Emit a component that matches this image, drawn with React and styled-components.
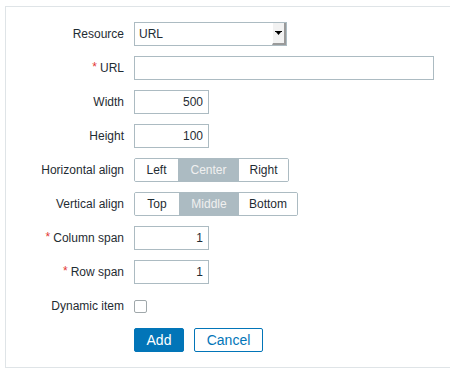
import React from "react";
import styled, { createGlobalStyle } from "styled-components";

const GlobalStyle = createGlobalStyle`
  html, body {
    margin: 0;
    padding: 0;
    background: #ffffff;
    overflow: hidden;
  }
  body {
    font-family: "Liberation Sans", Arial, sans-serif;
    font-size: 12px;
    color: #1f2c33;
  }
`;

const Panel = styled.form`
  margin: 6px 0 0 5px;
  width: 445px;
  box-sizing: border-box;
  border: 1px solid #dfe4e7;
  border-right: none;
  background: #ffffff;
  padding: 15px 0;
  display: grid;
  grid-template-columns: 118px 1fr;
  column-gap: 10px;
  row-gap: 10px;
  grid-auto-rows: 24px;
`;

const Label = styled.label`
  display: flex;
  align-items: center;
  justify-content: flex-end;
  white-space: nowrap;
  color: #1f2c33;

  ${(p) =>
    p.$required &&
    `
    &::before {
      content: "*";
      color: #e33734;
      margin-right: 3px;
      position: relative;
      top: -1px;
    }
  `}
`;

const Field = styled.div`
  display: flex;
  align-items: center;
  gap: 10px;
`;

const Input = styled.input`
  box-sizing: border-box;
  height: 24px;
  width: ${(p) => p.$width}px;
  border: 1px solid #acbbc2;
  border-radius: 0;
  background: #ffffff;
  padding: 0 5px;
  margin: 0;
  font-family: inherit;
  font-size: 12px;
  color: #1f2c33;
  text-align: ${(p) => (p.$right ? "right" : "left")};
  outline: none;
`;

const Select = styled.div`
  box-sizing: border-box;
  height: 24px;
  width: 153px;
  border: 1px solid #acbbc2;
  background: #ffffff;
  display: flex;
  align-items: stretch;
`;

const SelectValue = styled.span`
  flex: 1;
  display: flex;
  align-items: center;
  padding-left: 4px;
`;

const SelectButton = styled.span`
  width: 14px;
  box-sizing: border-box;
  background: #f2f2f2;
  border-left: 1px solid #ffffff;
  border-right: 2px solid #9a9a9a;
  border-bottom: 2px solid #9a9a9a;
  display: flex;
  align-items: center;
  justify-content: center;
`;

const Segmented = styled.div`
  display: flex;
  height: 24px;
  box-sizing: border-box;
  border: 1px solid #acbbc2;
  border-radius: 2px;
  overflow: hidden;
`;

const Segment = styled.span`
  display: flex;
  align-items: center;
  justify-content: center;
  width: ${(p) => p.$width}px;
  background: ${(p) => (p.$active ? "#acbbc2" : "#ffffff")};
  color: ${(p) => (p.$active ? "#f0f0f0" : "#1f2c33")};
`;

const Checkbox = styled.span`
  box-sizing: border-box;
  width: 13px;
  height: 13px;
  border: 1px solid #a0a8ab;
  border-radius: 2px;
  background: #ffffff;
`;

const Button = styled.button`
  box-sizing: border-box;
  height: 24px;
  width: ${(p) => p.$width}px;
  padding: 0;
  margin: 0;
  border-radius: 2px;
  border: 1px solid #0275b8;
  background: ${(p) => (p.$primary ? "#0275b8" : "#ffffff")};
  color: ${(p) => (p.$primary ? "#ffffff" : "#0275b8")};
  font-family: inherit;
  font-size: 14px;
  cursor: pointer;
`;

const Spacer = styled.div``;

function Arrow() {
  return (
    <svg width="7" height="5" viewBox="0 0 7 5">
      <rect x="0" y="0" width="7" height="1" fill="#000" />
      <polygon points="1,1 6,1 3.5,4" fill="#000" />
    </svg>
  );
}

function App() {
  return (
    <>
      <GlobalStyle />
      <Panel onSubmit={(e) => e.preventDefault()}>
        <Label>Resource</Label>
        <Field>
          <Select>
            <SelectValue>URL</SelectValue>
            <SelectButton>
              <Arrow />
            </SelectButton>
          </Select>
        </Field>

        <Label $required>URL</Label>
        <Field>
          <Input $width={300} defaultValue="" />
        </Field>

        <Label>Width</Label>
        <Field>
          <Input $width={75} $right defaultValue="500" />
        </Field>

        <Label>Height</Label>
        <Field>
          <Input $width={75} $right defaultValue="100" />
        </Field>

        <Label>Horizontal align</Label>
        <Field>
          <Segmented>
            <Segment $width={43}>Left</Segment>
            <Segment $width={61} $active>Center</Segment>
            <Segment $width={49}>Right</Segment>
          </Segmented>
        </Field>

        <Label>Vertical align</Label>
        <Field>
          <Segmented>
            <Segment $width={44}>Top</Segment>
            <Segment $width={60} $active>Middle</Segment>
            <Segment $width={58}>Bottom</Segment>
          </Segmented>
        </Field>

        <Label $required>Column span</Label>
        <Field>
          <Input $width={75} $right defaultValue="1" />
        </Field>

        <Label $required>Row span</Label>
        <Field>
          <Input $width={75} $right defaultValue="1" />
        </Field>

        <Label>Dynamic item</Label>
        <Field>
          <Checkbox />
        </Field>

        <Spacer />
        <Field>
          <Button $primary $width={50} type="submit">Add</Button>
          <Button $width={69} type="button">Cancel</Button>
        </Field>
      </Panel>
    </>
  );
}

export default App;
